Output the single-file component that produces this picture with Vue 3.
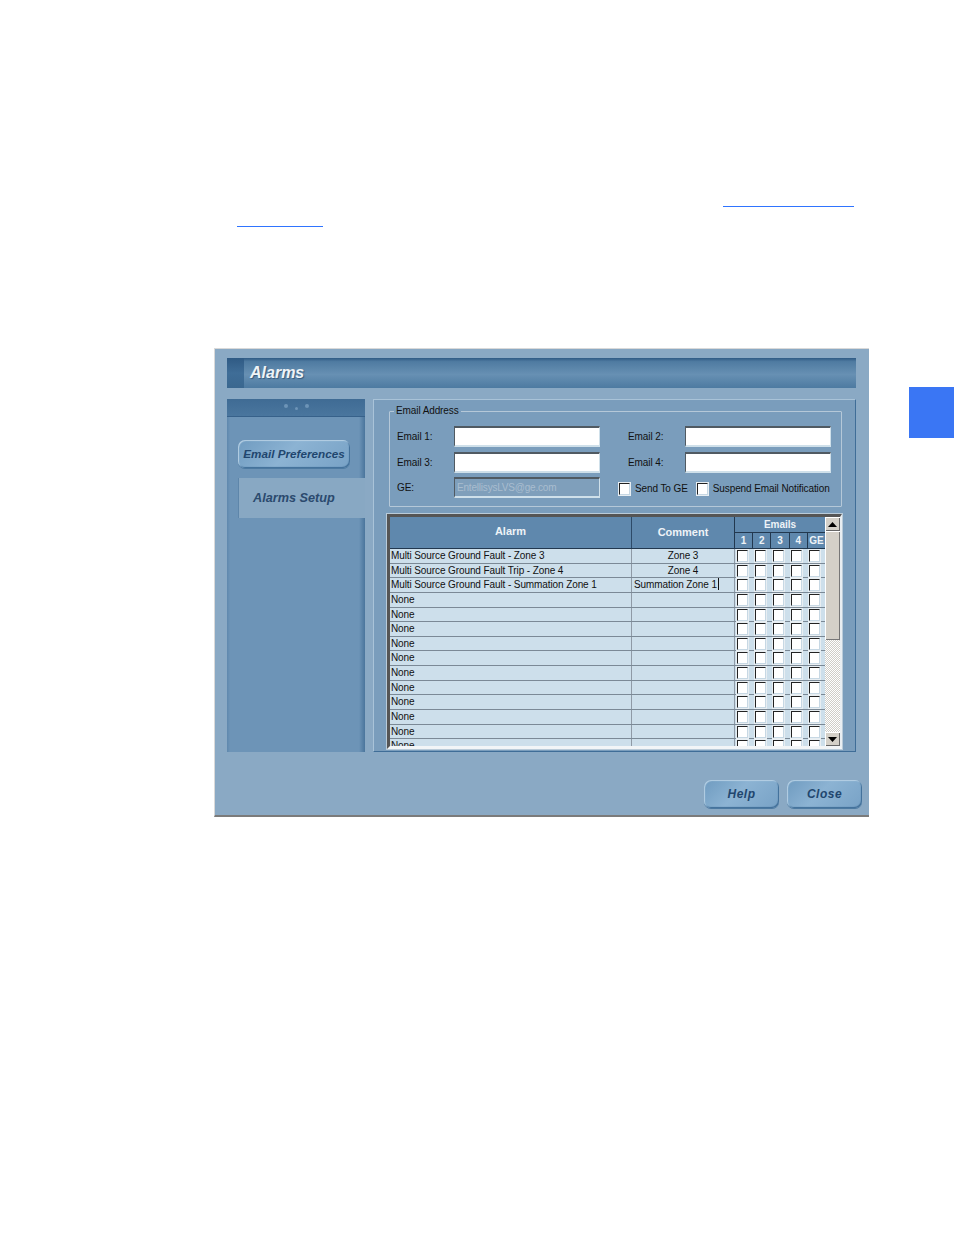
<script setup>
const alarms = [
  { name: 'Multi Source Ground Fault - Zone 3', comment: 'Zone 3', cls: 'center' },
  { name: 'Multi Source Ground Fault Trip - Zone 4', comment: 'Zone 4', cls: 'center' },
  { name: 'Multi Source Ground Fault - Summation Zone 1', comment: 'Summation Zone 1', cls: 'editing' },
  ...Array.from({ length: 11 }, () => ({ name: 'None', comment: '', cls: 'center' }))
]
const boxes = [1, 2, 3, 4, 5]
const heads = ['1', '2', '3', '4', 'GE']
</script>

<template>
  <div class="page">
    <div class="links">
      <div class="link link-a"></div>
      <div class="link link-b"></div>
    </div>
    <div class="tab-mark"></div>
    <div class="window">
      <div class="title">
        <div class="title-cap"></div>
        <span class="title-text">Alarms</span>
      </div>
      <div class="body">
        <aside class="side">
          <div class="side-head">
            <i class="dot"></i><i class="dot low"></i><i class="dot"></i>
          </div>
          <button class="btn pref">Email Preferences</button>
          <div class="side-tab">Alarms Setup</div>
        </aside>
        <main class="panel">
          <fieldset class="email">
            <legend>Email Address</legend>
            <div class="form">
              <label>Email 1:</label><div class="input"></div>
              <label class="second">Email 2:</label><div class="input"></div>
              <label>Email 3:</label><div class="input"></div>
              <label class="second">Email 4:</label><div class="input"></div>
              <label>GE:</label><div class="input disabled">EntellisysLVS@ge.com</div>
              <div class="checks">
                <span class="check-item"><i class="box"></i>Send To GE</span>
                <span class="check-item"><i class="box"></i>Suspend Email Notification</span>
              </div>
            </div>
          </fieldset>
          <div class="table-wrap">
            <div class="table">
              <div class="thead">
                <div class="th col-alarm">Alarm</div>
                <div class="th col-comment">Comment</div>
                <div class="th-emails">
                  <div class="th-top">Emails</div>
                  <div class="th-sub">
                    <span v-for="h in heads" :key="h" class="th-num">{{ h }}</span>
                  </div>
                </div>
              </div>
              <div v-for="(a, i) in alarms" :key="i" class="row">
                <div class="cell col-alarm">{{ a.name }}</div>
                <div class="cell col-comment" :class="a.cls">{{ a.comment }}</div>
                <div class="cell-boxes">
                  <span v-for="b in boxes" :key="b" class="box-cell"><i class="box"></i></span>
                </div>
              </div>
            </div>
            <div class="scroll">
              <div class="arrow"><svg width="9" height="5" viewBox="0 0 9 5"><path d="M4.5 0 L9 5 L0 5 Z" fill="#000"/></svg></div>
              <div class="thumb"></div>
              <div class="track"></div>
              <div class="arrow"><svg width="9" height="5" viewBox="0 0 9 5"><path d="M0 0 L9 0 L4.5 5 Z" fill="#000"/></svg></div>
            </div>
          </div>
        </main>
      </div>
      <div class="footer">
        <button class="btn foot">Help</button>
        <button class="btn foot">Close</button>
      </div>
    </div>
  </div>
</template>

<style scoped>
.page {
  position: relative;
  width: 954px;
  height: 1235px;
  background: #fff;
  overflow: hidden;
  padding-top: 206px;
  box-sizing: border-box;
  font-family: "Liberation Sans", Arial, sans-serif;
}
.links {
  height: 142px;
  display: flex;
  flex-direction: column;
  gap: 19px;
}
.link { height: 1px; background: #2f74ff; }
.link-a { width: 131px; margin-left: 723px; }
.link-b { width: 86px; margin-left: 237px; }
.tab-mark {
  position: absolute;
  left: 909px;
  top: 387px;
  width: 45px;
  height: 51px;
  background: #3a76f4;
}
.window {
  box-sizing: border-box;
  margin-left: 214px;
  width: 655px;
  height: 469px;
  background: #8aa9c4;
  border-top: 1px solid #d9d9d9;
  border-left: 1px solid #d9d9d9;
  border-bottom: 2px solid #7b7b7b;
  padding: 9px 13px 0 12px;
}
.title {
  height: 30px;
  display: flex;
  align-items: center;
  background: linear-gradient(#2f5a84 0, #4f7ba1 12%, #6790b3 55%, #4d7aa1 100%);
}
.title-cap {
  width: 17px;
  height: 100%;
  background: linear-gradient(#2f5a84, #3f6d97 50%, #3a678f);
}
.title-text {
  margin-left: 6px;
  color: #eef3f7;
  font-size: 16px;
  font-weight: bold;
  font-style: italic;
  text-shadow: 1px 1px 1px #35597c;
}
.body {
  display: flex;
  gap: 8px;
  margin-top: 11px;
  height: 353px;
}
.side {
  width: 138px;
  flex: none;
  background: linear-gradient(90deg, #5f88ad 0, #6d94b7 3px, #6d94b7 132px, #4a759c 138px);
  display: flex;
  flex-direction: column;
}
.side-head {
  background: linear-gradient(#3f6b94, #4a769e);
  border-bottom: 1px solid #37618a;
  display: flex;
  justify-content: center;
  gap: 7px;
  padding-top: 5px;
  box-sizing: border-box;
  height: 18px;
}
.dot {
  width: 4px;
  height: 4px;
  border-radius: 50%;
  background: #6d94b7;
}
.dot.low { margin-top: 3px; width: 3px; height: 3px; }
.btn {
  font-family: "Liberation Sans", Arial, sans-serif;
  font-weight: bold;
  font-style: italic;
  color: #21466e;
  border: 0;
  padding: 0;
  background: linear-gradient(135deg, #6f9bc0, #8cb3d3 45%, #78a2c6);
  border-radius: 7px;
  box-shadow: inset 1px 1px 1px #b6d0e4, inset -1px -1px 1px #3f6d97, 0 1px 0 #4d7aa1;
}
.pref {
  box-sizing: border-box;
  width: 112px;
  height: 28px;
  margin: 23px 0 0 11px;
  padding-bottom: 2px;
  font-size: 11.7px;
  white-space: nowrap;
}
.side-tab {
  box-sizing: border-box;
  margin: 10px 0 0 11px;
  width: 127px;
  height: 40px;
  background: #88a8c3;
  border-left: 1px solid #5e86aa;
  color: #2b4a6e;
  font-size: 12.7px;
  font-weight: bold;
  font-style: italic;
  padding: 13px 0 0 14px;
}
.panel {
  flex: 1;
  box-sizing: border-box;
  background: #7a9dbc;
  border-top: 1px solid #a9c3d8;
  border-left: 1px solid #a9c3d8;
  border-right: 1px solid #3f6d97;
  border-bottom: 1px solid #3f6d97;
  padding: 5px 0 0 15px;
}
.email {
  box-sizing: border-box;
  width: 453px;
  height: 102px;
  margin: 0;
  padding: 0;
  border: 1px solid #b5c8d8;
  border-radius: 1px;
}
legend {
  margin-left: 4px;
  padding: 0 2px;
  font-size: 10px;
  color: #111;
  line-height: 12px;
  letter-spacing: -0.1px;
}
.form {
  display: grid;
  grid-template-columns: 57px 146px 85px 146px;
  grid-auto-rows: 21px;
  row-gap: 4.5px;
  padding: 9px 0 0 7px;
  align-items: center;
  font-size: 10px;
  color: #111;
  letter-spacing: -0.1px;
}
.form label.second { padding-left: 28px; }
.input {
  box-sizing: border-box;
  height: 21px;
  background: #fff;
  border-top: 2px solid #505a62;
  border-left: 1px solid #505a62;
  border-right: 1px solid #cfe0ea;
  border-bottom: 2px solid #cfe0ea;
}
.input.disabled {
  background: #7f9fbb;
  color: #a9bdcf;
  line-height: 17px;
  padding-left: 2px;
  overflow: hidden;
  white-space: nowrap;
  letter-spacing: -0.2px;
}
.checks {
  grid-column: 3 / 5;
  display: flex;
  gap: 9px;
  padding: 2px 0 0 19px;
  font-size: 10px;
}
.check-item { display: flex; align-items: center; gap: 5px; white-space: nowrap; }
.box {
  display: block;
  box-sizing: border-box;
  width: 11px;
  height: 12px;
  background: #fff;
  border-top: 1px solid #222;
  border-left: 1px solid #222;
  border-right: 1px solid #c7d8e4;
  border-bottom: 1px solid #c7d8e4;
  box-shadow: 0 0 0 1px #e8eef2;
  flex: none;
}
.table-wrap {
  box-sizing: border-box;
  display: flex;
  width: 455px;
  height: 235px;
  margin: 7px 0 0 -2px;
  background: #d4d0c8;
  border-top: 3px solid #555;
  border-left: 3px solid #555;
  border-right: 2px solid #e9eef2;
  border-bottom: 3px solid #f2f5f7;
  outline: 1px solid #b9cbd9;
}
.table {
  width: 435px;
  flex: none;
  overflow: hidden;
  background: #cddfeb;
  height: 229px;
  letter-spacing: -0.1px;
}
.thead {
  display: flex;
  height: 31px;
  background: #5f88ad;
  border-bottom: 1px solid #22384f;
  color: #eef3f7;
  font-weight: bold;
  font-size: 11px;
  letter-spacing: 0;
}
.col-alarm { width: 241px; flex: none; box-sizing: border-box; }
.col-comment { width: 103px; flex: none; box-sizing: border-box; border-left: 1px solid #8f9aa6; }
.th {
  display: flex;
  align-items: center;
  justify-content: center;
  height: 100%;
  box-sizing: border-box;
  padding-bottom: 3px;
}
.th.col-comment { border-left: 1px solid #2d4a68; padding-bottom: 1px; }
.th-emails {
  flex: 1;
  display: flex;
  flex-direction: column;
  border-left: 1px solid #22384f;
  background: #22384f;
  gap: 1px;
}
.th-top {
  height: 15px;
  background: #5f88ad;
  text-align: center;
  font-size: 10px;
  line-height: 15px;
}
.th-sub { display: flex; flex: 1; gap: 1px; }
.th-num {
  flex: 1;
  background: #5f88ad;
  text-align: center;
  font-size: 10px;
  line-height: 15px;
}
.row {
  display: flex;
  height: 14.63px;
  box-sizing: border-box;
  border-bottom: 1px solid #7b8996;
  font-size: 10px;
  color: #111;
  line-height: 13.5px;
}
.cell { white-space: nowrap; overflow: hidden; padding-left: 1px; }
.cell.center { text-align: center; padding-left: 0; }
.cell.editing { padding-left: 2px; }
.cell.editing::after {
  content: "";
  display: inline-block;
  width: 1px;
  height: 12px;
  background: #111;
  margin-left: 1px;
  vertical-align: -2px;
}
.cell-boxes {
  flex: 1;
  display: flex;
  border-left: 1px solid #8f9aa6;
}
.box-cell {
  flex: 1;
  display: flex;
  justify-content: flex-start;
  align-items: flex-start;
  padding: 1px 0 0 2px;
}
.scroll {
  flex: 1;
  display: flex;
  flex-direction: column;
  background: #e4e1da;
}
.arrow {
  height: 14px;
  flex: none;
  display: flex;
  align-items: center;
  justify-content: center;
  background: #d4d0c8;
  box-shadow: inset 1px 1px 0 #fff, inset -1px -1px 0 #666;
}
.thumb {
  height: 109px;
  flex: none;
  background: #d4d0c8;
  box-shadow: inset 1px 1px 0 #fff, inset -1px -1px 0 #777;
}
.track {
  flex: 1;
  background-image: repeating-conic-gradient(#fff 0 25%, #cfcdc7 0 50%);
  background-size: 2px 2px;
}
.footer {
  display: flex;
  justify-content: flex-end;
  gap: 8px;
  margin-top: 28px;
  margin-right: -6px;
}
.foot {
  width: 75px;
  height: 28px;
  font-size: 12px;
  letter-spacing: 0.5px;
}
</style>

<style>
html, body { margin: 0; background: #fff; }
</style>
